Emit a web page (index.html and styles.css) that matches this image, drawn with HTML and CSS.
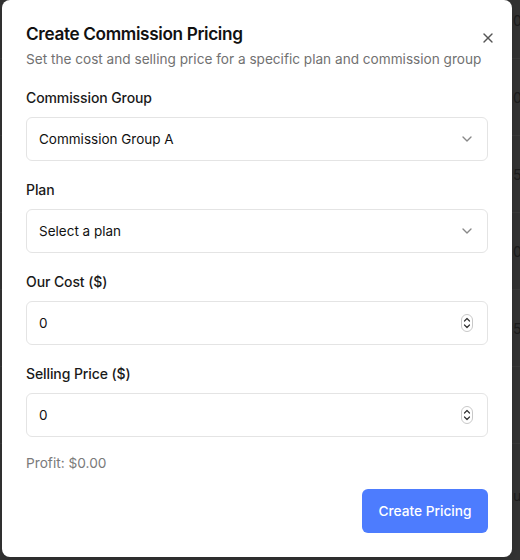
FILE: index.html
```html
<!DOCTYPE html>
<html>
<head>
<meta charset="utf-8">
<link rel="stylesheet" href="styles.css">
</head>
<body>
<div class="page">
  <div class="row"><span class="cell">0.00</span></div>
  <div class="row"><span class="cell">0.00</span></div>
  <div class="row"><span class="cell">5.00</span></div>
  <div class="row"><span class="cell">0.00</span></div>
  <div class="row"><span class="cell">5.00</span></div>
  <div class="row"><span class="cell"></span></div>
  <div class="row last"><span class="cell">u</span></div>
</div>
<div class="dialog">
  <button class="close" aria-label="Close">
    <svg width="16" height="16" viewBox="0 0 24 24" fill="none" stroke="currentColor" stroke-width="2" stroke-linecap="round" stroke-linejoin="round"><path d="M18 6 6 18"/><path d="m6 6 12 12"/></svg>
  </button>
  <div class="header">
    <h2 class="title">Create Commission Pricing</h2>
    <p class="desc">Set the cost and selling price for a specific plan and commission group</p>
  </div>
  <div class="fields">
    <div class="field">
      <label class="label">Commission Group</label>
      <div class="box">
        <span class="value">Commission Group A</span>
        <svg class="chev" width="16" height="16" viewBox="0 0 24 24" fill="none" stroke="currentColor" stroke-width="2" stroke-linecap="round" stroke-linejoin="round"><path d="m6 9 6 6 6-6"/></svg>
      </div>
    </div>
    <div class="field">
      <label class="label">Plan</label>
      <div class="box">
        <span class="value">Select a plan</span>
        <svg class="chev" width="16" height="16" viewBox="0 0 24 24" fill="none" stroke="currentColor" stroke-width="2" stroke-linecap="round" stroke-linejoin="round"><path d="m6 9 6 6 6-6"/></svg>
      </div>
    </div>
    <div class="field">
      <label class="label">Our Cost ($)</label>
      <div class="box">
        <span class="value">0</span>
        <svg class="spin" width="12" height="18" viewBox="0 0 12 18" fill="none"><rect x="0.5" y="0.5" width="11" height="17" rx="5.5" stroke="#c8c8c8"/><path d="M3.5 7 6 4.5 8.5 7" stroke="#333" stroke-width="1.2" stroke-linecap="round" stroke-linejoin="round"/><path d="M3.5 11 6 13.5 8.5 11" stroke="#333" stroke-width="1.2" stroke-linecap="round" stroke-linejoin="round"/></svg>
      </div>
    </div>
    <div class="field">
      <label class="label">Selling Price ($)</label>
      <div class="box">
        <span class="value">0</span>
        <svg class="spin" width="12" height="18" viewBox="0 0 12 18" fill="none"><rect x="0.5" y="0.5" width="11" height="17" rx="5.5" stroke="#c8c8c8"/><path d="M3.5 7 6 4.5 8.5 7" stroke="#333" stroke-width="1.2" stroke-linecap="round" stroke-linejoin="round"/><path d="M3.5 11 6 13.5 8.5 11" stroke="#333" stroke-width="1.2" stroke-linecap="round" stroke-linejoin="round"/></svg>
      </div>
    </div>
  </div>
  <p class="profit">Profit: $0.00</p>
  <div class="footer">
    <button class="primary">Create Pricing</button>
  </div>
</div>
</body>
</html>
```

FILE: styles.css
```css
* { box-sizing: border-box; }
html, body { margin: 0; padding: 0; }
body {
  width: 520px;
  height: 560px;
  overflow: hidden;
  background: #333333;
  font-family: Inter, "Liberation Sans", sans-serif;
  position: relative;
}
.page {
  margin-top: -18px;
}
.row {
  height: 77px;
  border-bottom: 1px solid #3b3b3b;
  display: flex;
  align-items: center;
  padding-left: 513px;
}
.row.last { border-bottom: none; align-items: flex-end; height: 60px; }
.cell {
  font-size: 14px;
  color: #1c1c1c;
  white-space: nowrap;
}
.dialog {
  position: absolute;
  left: 2px;
  top: 0;
  width: 510px;
  background: #fff;
  border-radius: 8px;
  padding: 24px;
  box-shadow: 0 4px 12px rgba(0,0,0,0.15);
  color: #0a0a0a;
}
.close {
  position: absolute;
  right: 16px;
  top: 30px;
  width: 16px;
  height: 16px;
  padding: 0;
  border: 0;
  background: none;
  color: #555;
  display: flex;
}
.header { display: flex; flex-direction: column; gap: 5px; }
.title {
  margin: 0;
  font-size: 17.2px;
  line-height: 20px;
  font-weight: 600;
  letter-spacing: -0.35px;
  color: #111;
}
.desc {
  margin: 0;
  font-size: 13.62px;
  line-height: 20px;
  color: #717171;
  white-space: nowrap;
}
.fields {
  margin-top: 19px;
  display: flex;
  flex-direction: column;
  gap: 19px;
}
.field { display: flex; flex-direction: column; gap: 9px; }
.label {
  font-size: 14px;
  line-height: 20px;
  font-weight: 500;
  letter-spacing: -0.1px;
  color: #1a1a1a;
}
.box {
  height: 44px;
  border: 1px solid #e4e4e4;
  border-radius: 6px;
  display: flex;
  align-items: center;
  justify-content: space-between;
  padding: 0 12px;
}
.value { font-size: 13.5px; color: #111; }
.chev { color: #888; }
.spin { margin-right: 2px; }
.profit {
  margin: 16px 0 0;
  font-size: 13.7px;
  line-height: 20px;
  color: #7a7a7a;
}
.footer {
  margin-top: 16px;
  display: flex;
  justify-content: flex-end;
}
.primary {
  height: 44px;
  width: 126px;
  border: 0;
  border-radius: 6px;
  background: #4d7cfe;
  color: #fff;
  font-family: Inter, "Liberation Sans", sans-serif;
  font-size: 13.7px;
  font-weight: 500;
}
```
